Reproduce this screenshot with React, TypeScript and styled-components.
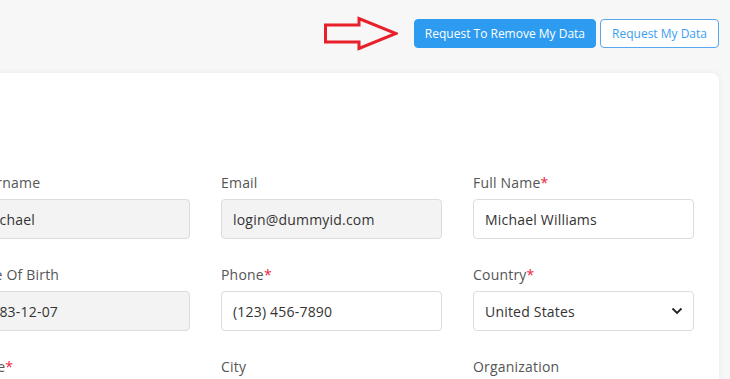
import styled, { createGlobalStyle } from 'styled-components'

const GlobalStyle = createGlobalStyle`
  html, body {
    margin: 0;
    padding: 0;
    background: #f7f7f7;
    overflow: hidden;
    font-family: 'Open Sans', 'Liberation Sans', sans-serif;
  }
`

type Field = {
  label: string
  value?: string
  required?: boolean
  disabled?: boolean
  select?: boolean
}

const fields: Field[] = [
  { label: 'Username', value: 'Michael', disabled: true },
  { label: 'Email', value: 'login@dummyid.com', disabled: true },
  { label: 'Full Name', value: 'Michael Williams', required: true },
  { label: 'Date Of Birth', value: '1983-12-07', disabled: true },
  { label: 'Phone', value: '(123) 456-7890', required: true },
  { label: 'Country', value: 'United States', required: true, select: true },
  { label: 'State', value: '', required: true },
  { label: 'City', value: '' },
  { label: 'Organization', value: '' },
]

const App = () => {
  return (
    <Page>
      <GlobalStyle />
      <TopBar>
        <Arrow width="74" height="36" viewBox="0 0 74 36">
          <path
            d="M1.5 9 H35 V2.5 L72 17.5 L35 32.5 V26 H1.5 Z"
            fill="none"
            stroke="#e8202a"
            strokeWidth="3"
            strokeLinejoin="miter"
          />
        </Arrow>
        <Button $primary>Request To Remove My Data</Button>
        <Button>Request My Data</Button>
      </TopBar>
      <Card>
        <FormGrid>
          {fields.map((f) => (
            <FieldBox key={f.label}>
              <Label>
                {f.label}
                {f.required && <Star>*</Star>}
              </Label>
              {f.select ? (
                <SelectWrap>
                  <Input as="div">{f.value}</Input>
                  <Chevron width="12" height="8" viewBox="0 0 12 8">
                    <path d="M1.5 1.5 L6 6 L10.5 1.5" fill="none" stroke="#222" strokeWidth="1.8" />
                  </Chevron>
                </SelectWrap>
              ) : (
                <Input $disabled={f.disabled}>{f.value}</Input>
              )}
            </FieldBox>
          ))}
        </FormGrid>
      </Card>
    </Page>
  )
}

export default App

const Page = styled.div`
  display: flex;
  flex-direction: column;
  align-items: flex-end;
  padding: 19px 11px 0 0;
`

const TopBar = styled.div`
  display: flex;
  align-items: center;
  gap: 4px;
  height: 29px;
`

const Arrow = styled.svg`
  margin-right: 12px;
  margin-top: 1px;
`

const Button = styled.div<{ $primary?: boolean }>`
  height: 29px;
  box-sizing: border-box;
  display: flex;
  align-items: center;
  padding: 0 ${(p) => (p.$primary ? '10px' : '11px')};
  border-radius: 4px;
  font-size: 12px;
  border: 1px solid ${(p) => (p.$primary ? '#2d9bf0' : '#57a8ef')};
  background: ${(p) => (p.$primary ? '#2d9bf0' : '#ffffff')};
  color: ${(p) => (p.$primary ? '#ffffff' : '#3a9ef0')};
  font-weight: ${(p) => (p.$primary ? 500 : 400)};
  white-space: nowrap;
`

const Card = styled.div`
  width: 773px;
  flex-shrink: 0;
  box-sizing: border-box;
  margin-top: 25px;
  padding: 100px 25px 30px;
  background: #fff;
  border-radius: 8px;
  box-shadow: 0 0 6px rgba(0, 0, 0, 0.06);
`

const FormGrid = styled.div`
  display: grid;
  grid-template-columns: 219px 221px 221px;
  column-gap: 31px;
  row-gap: 26px;
`

const FieldBox = styled.div`
  display: flex;
  flex-direction: column;
  gap: 6px;
`

const Label = styled.div`
  font-size: 14px;
  line-height: 20px;
  letter-spacing: 0.2px;
  color: #555;
`

const Star = styled.span`
  color: #f0243c;
`

const Input = styled.div<{ $disabled?: boolean }>`
  height: 40px;
  box-sizing: border-box;
  display: flex;
  align-items: center;
  padding: 0 11px;
  border: 1px solid #dcdcdc;
  border-radius: 4px;
  background: ${(p) => (p.$disabled ? '#f3f3f3' : '#fff')};
  font-size: 14px;
  letter-spacing: 0.2px;
  color: #333;
  white-space: nowrap;
`

const SelectWrap = styled.div`
  position: relative;
`

const Chevron = styled.svg`
  position: absolute;
  right: 11px;
  top: 16px;
`
